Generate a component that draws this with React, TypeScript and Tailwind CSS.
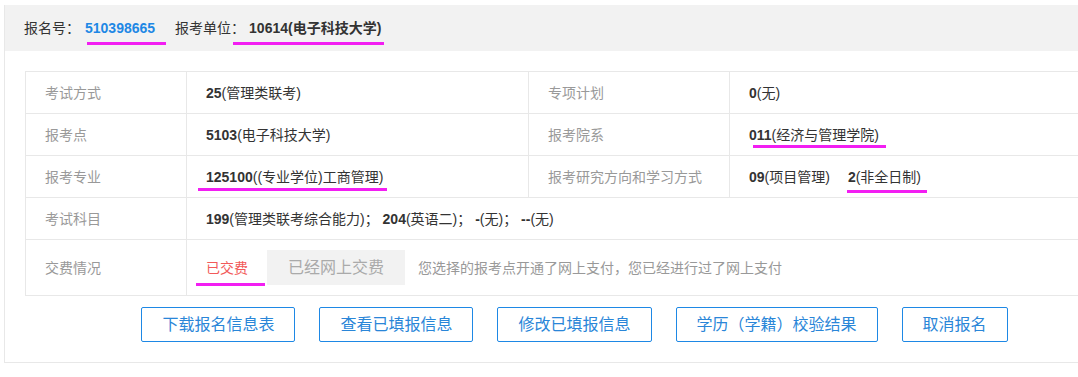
import React from "react";

const Mark = ({ left, width, top }: { left: number; width: number; top: number }) => (
  <span
    className="pointer-events-none absolute h-[3px] bg-[#f21ef2]"
    style={{ left, width, top }}
  />
);

const Label = ({ children, last }: { children: React.ReactNode; last?: boolean }) => (
  <div
    className={`flex items-center border-r border-b border-[#e8e8e8] pl-[19px] text-[#999] ${
      last ? "h-[56px]" : "h-[42px]"
    }`}
  >
    {children}
  </div>
);

const Value = ({
  children,
  span,
  last,
}: {
  children: React.ReactNode;
  span?: boolean;
  last?: boolean;
}) => (
  <div
    className={`flex items-center border-r border-b border-[#e8e8e8] pl-[19px] text-[#333] ${
      span ? "col-span-3" : ""
    } ${last ? "h-[56px]" : "h-[42px]"}`}
  >
    {children}
  </div>
);

const buttons = [
  "下载报名信息表",
  "查看已填报信息",
  "修改已填报信息",
  "学历（学籍）校验结果",
  "取消报名",
];

const App = () => {
  return (
    <div
      className="h-[377px] w-full overflow-hidden bg-white pt-[5px] pl-[4px] text-[14px] leading-[20px]"
      style={{ fontFamily: '"Liberation Sans", Arial, "Noto Sans CJK SC", sans-serif' }}
    >
      <div className="w-[1141px] border-x border-b border-[#e8e8e8]">
        {/* header */}
        <div className="flex h-[46px] items-center bg-[#f2f2f2] pl-[19px] text-[#333]">
          <span>报名号：</span>
          <span className="relative ml-[5px] font-bold text-[#1e88e5]">
            510398665
            <Mark left={2} width={79} top={24} />
          </span>
          <span className="ml-[20px]">报考单位：</span>
          <span className="relative ml-[4px] font-bold">
            10614(电子科技大学)
            <Mark left={-16} width={151} top={24} />
          </span>
        </div>

        <div className="px-[20px] pt-[20px] pb-[20px]">
          <div className="grid grid-cols-[161px_342px_201px_1fr] border-t border-l border-[#e8e8e8]">
            <Label>考试方式</Label>
            <Value>
              <b>25</b>(管理类联考)
            </Value>
            <Label>专项计划</Label>
            <Value>
              <b>0</b>(无)
            </Value>

            <Label>报考点</Label>
            <Value>
              <b>5103</b>(电子科技大学)
            </Value>
            <Label>报考院系</Label>
            <Value>
              <span className="relative">
                <b>011</b>(经济与管理学院)
                <Mark left={4} width={133} top={20} />
              </span>
            </Value>

            <Label>报考专业</Label>
            <Value>
              <span className="relative">
                <b>125100</b>((专业学位)工商管理)
                <Mark left={-8} width={189} top={21} />
              </span>
            </Value>
            <Label>报考研究方向和学习方式</Label>
            <Value>
              <b>09</b>(项目管理)
              <span className="relative ml-[18px]">
                <b>2</b>(非全日制)
                <Mark left={-1} width={80} top={23} />
              </span>
            </Value>

            <Label>考试科目</Label>
            <Value span>
              <b>199</b>(管理类联考综合能力)；&nbsp;<b>204</b>(英语二)；&nbsp;<b>-</b>(无)；&nbsp;
              <b>--</b>(无)
            </Value>

            <Label last>交费情况</Label>
            <Value span last>
              <span className="relative text-[#f25a5a]">
                已交费
                <Mark left={-10} width={69} top={25} />
              </span>
              <span className="ml-[19px] flex h-[35px] w-[138px] items-center justify-center bg-[#f2f2f2] text-[16px] text-[#aaa]">
                已经网上交费
              </span>
              <span className="ml-[13px] text-[#999]">
                您选择的报考点开通了网上支付，您已经进行过了网上支付
              </span>
            </Value>
          </div>

          <div className="mt-[11px] flex justify-center gap-[24px]">
            {buttons.map((b) => (
              <button
                key={b}
                className="h-[35px] rounded-[2px] border border-[#1e88e5] bg-white px-[20px] text-[16px] text-[#2a86d8]"
              >
                {b}
              </button>
            ))}
          </div>
        </div>
      </div>
    </div>
  );
};

export default App;
